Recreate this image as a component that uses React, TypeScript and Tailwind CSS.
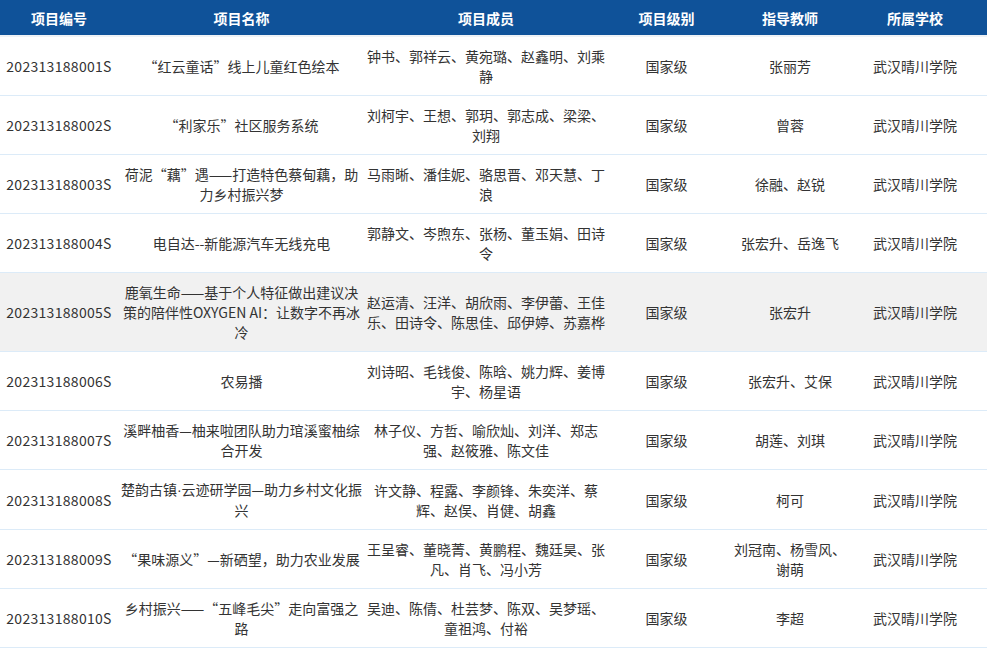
import React from 'react'

type Row = {
  id: string
  name: React.ReactNode[]
  members: string[]
  level: string
  teacher: string[]
  school: string
}

// the middle dot is narrow in the reference, the CJK font draws it full-width
const Dot = () => <span style={{ fontFamily: '"Liberation Sans", sans-serif' }}>·</span>

const rows: Row[] = [
  { id: '202313188001S', name: ['“红云童话”线上儿童红色绘本'], members: ['钟书、郭祥云、黄宛璐、赵鑫明、刘乘', '静'], level: '国家级', teacher: ['张丽芳'], school: '武汉晴川学院' },
  { id: '202313188002S', name: ['“利家乐”社区服务系统'], members: ['刘柯宇、王想、郭玥、郭志成、梁梁、', '刘翔'], level: '国家级', teacher: ['曾蓉'], school: '武汉晴川学院' },
  { id: '202313188003S', name: ['荷泥“藕”遇——打造特色蔡甸藕，助', '力乡村振兴梦'], members: ['马雨晰、潘佳妮、骆思晋、邓天慧、丁', '浪'], level: '国家级', teacher: ['徐融、赵锐'], school: '武汉晴川学院' },
  { id: '202313188004S', name: ['电自达--新能源汽车无线充电'], members: ['郭静文、岑煦东、张杨、董玉娟、田诗', '令'], level: '国家级', teacher: ['张宏升、岳逸飞'], school: '武汉晴川学院' },
  { id: '202313188005S', name: ['鹿氧生命——基于个人特征做出建议决', '策的陪伴性OXYGEN AI：让数字不再冰', '冷'], members: ['赵运清、汪洋、胡欣雨、李伊蕾、王佳', '乐、田诗令、陈思佳、邱伊婷、苏嘉桦'], level: '国家级', teacher: ['张宏升'], school: '武汉晴川学院' },
  { id: '202313188006S', name: ['农易播'], members: ['刘诗昭、毛钱俊、陈晗、姚力辉、姜博', '宇、杨星语'], level: '国家级', teacher: ['张宏升、艾保'], school: '武汉晴川学院' },
  { id: '202313188007S', name: ['溪畔柚香—柚来啦团队助力琯溪蜜柚综', '合开发'], members: ['林子仪、方哲、喻欣灿、刘洋、郑志', '强、赵筱雅、陈文佳'], level: '国家级', teacher: ['胡莲、刘琪'], school: '武汉晴川学院' },
  { id: '202313188008S', name: [<>楚韵古镇<Dot />云迹研学园—助力乡村文化振</>, '兴'], members: ['许文静、程露、李颜锋、朱奕洋、蔡', '辉、赵俣、肖健、胡鑫'], level: '国家级', teacher: ['柯可'], school: '武汉晴川学院' },
  { id: '202313188009S', name: ['“果味源义”—新硒望，助力农业发展'], members: ['王呈睿、董晓菁、黄鹏程、魏廷昊、张', '凡、肖飞、冯小芳'], level: '国家级', teacher: ['刘冠南、杨雪风、', '谢萌'], school: '武汉晴川学院' },
  { id: '202313188010S', name: ['乡村振兴——“五峰毛尖”走向富强之', '路'], members: ['吴迪、陈倩、杜芸梦、陈双、吴梦瑶、', '童祖鸿、付裕'], level: '国家级', teacher: ['李超'], school: '武汉晴川学院' },
]

const headers = ['项目编号', '项目名称', '项目成员', '项目级别', '指导教师', '所属学校']

function Lines({ lines }: { lines: React.ReactNode[] }) {
  return (
    <>
      {lines.map((l, i) => (
        <span key={i} className="block whitespace-nowrap">
          {l}
        </span>
      ))}
    </>
  )
}

export default function App() {
  return (
    <div
      className="w-[987px] h-[655px] overflow-hidden bg-white text-[14px] leading-[20px] text-[#333]"
      style={{ fontFamily: '"Microsoft YaHei", "Noto Sans CJK SC", sans-serif' }}
    >
      <table className="w-[987px] table-fixed border-collapse">
        <colgroup>
          <col className="w-[118px]" />
          <col className="w-[247px]" />
          <col className="w-[242px]" />
          <col className="w-[119px]" />
          <col className="w-[128px]" />
          <col className="w-[133px]" />
        </colgroup>
        <thead>
          <tr className="bg-[#0f5299] border-b-2 border-[#eef2f6]">
            {headers.map((h, i) => (
              <th
                key={h}
                className={`h-[36px] p-0 text-center font-bold text-white ${i === 5 ? 'pr-[11px]' : ''}`}
              >
                {h}
              </th>
            ))}
          </tr>
        </thead>
        <tbody>
          {rows.map((r, idx) => (
            <tr
              key={r.id}
              className={`border-b border-[#dcebf8] ${idx === 4 ? 'bg-[#f1f1f1]' : 'bg-white'}`}
            >
              <td className="px-0 py-[9px] text-center align-middle tracking-[0.3px]">{r.id}</td>
              <td className="px-[2px] py-[9px] text-center align-middle">
                <Lines lines={r.name} />
              </td>
              <td className="px-[2px] py-[9px] text-center align-middle">
                <Lines lines={r.members} />
              </td>
              <td className="px-0 py-[9px] text-center align-middle">{r.level}</td>
              <td className="px-0 py-[9px] text-center align-middle">
                <Lines lines={r.teacher} />
              </td>
              <td className="pl-0 pr-[11px] py-[9px] text-center align-middle">{r.school}</td>
            </tr>
          ))}
        </tbody>
      </table>
    </div>
  )
}
